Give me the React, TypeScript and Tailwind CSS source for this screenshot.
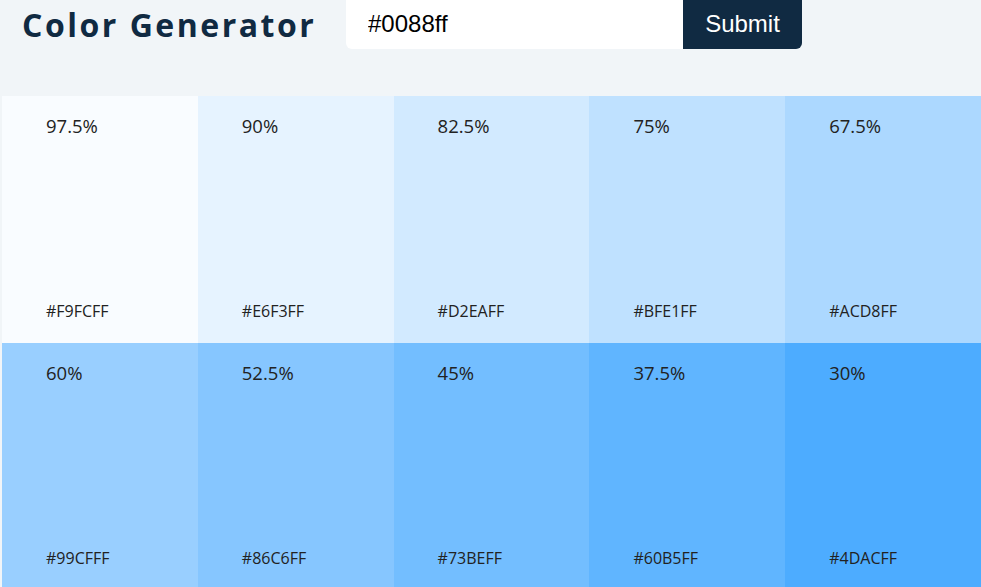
import { useState, FormEvent } from "react";

interface Shade {
  weight: string;
  hex: string;
  bg: string;
}

const shades: Shade[] = [
  { weight: "97.5%", hex: "#F9FCFF", bg: "bg-[#f9fcff]" },
  { weight: "90%", hex: "#E6F3FF", bg: "bg-[#e6f3ff]" },
  { weight: "82.5%", hex: "#D2EAFF", bg: "bg-[#d2eaff]" },
  { weight: "75%", hex: "#BFE1FF", bg: "bg-[#bfe1ff]" },
  { weight: "67.5%", hex: "#ACD8FF", bg: "bg-[#acd8ff]" },
  { weight: "60%", hex: "#99CFFF", bg: "bg-[#99cfff]" },
  { weight: "52.5%", hex: "#86C6FF", bg: "bg-[#86c6ff]" },
  { weight: "45%", hex: "#73BEFF", bg: "bg-[#73beff]" },
  { weight: "37.5%", hex: "#60B5FF", bg: "bg-[#60b5ff]" },
  { weight: "30%", hex: "#4DACFF", bg: "bg-[#4dacff]" },
];

function ColorTile({ weight, hex, bg }: Shade) {
  return (
    <article
      className={`${bg} h-[247px] flex flex-col justify-between pl-[44px] pt-[17px] pb-[21px] font-['Open_Sans',sans-serif] text-[#222]`}
    >
      <p className="text-[18.5px] leading-[26px]">{weight}</p>
      <p className="text-[16px] leading-[22px]">{hex}</p>
    </article>
  );
}

export default function App() {
  const [color, setColor] = useState("#0088ff");

  const handleSubmit = (e: FormEvent) => {
    e.preventDefault();
  };

  return (
    <main className="min-h-screen bg-[#f1f5f8]">
      {/* Header with form */}
      <section className="flex items-start h-[96px]">
        <h1 className="w-[346px] pl-[22px] pt-[5px] text-[32px] leading-10 font-bold tracking-[2.5px] text-[#102a42] font-['Open_Sans',sans-serif]">
          Color Generator
        </h1>
        <form onSubmit={handleSubmit} className="flex">
          <input
            type="text"
            value={color}
            onChange={(e) => setColor(e.target.value)}
            className="w-[337px] h-[49px] pl-[22px] pb-[1px] bg-white rounded-bl-md text-[24px] text-black font-['Liberation_Sans',sans-serif] focus:outline-none"
          />
          <button
            type="submit"
            className="w-[119px] h-[49px] pb-[1px] bg-[#102a42] text-white text-[24px] rounded-br-md font-['Liberation_Sans',sans-serif]"
          >
            Submit
          </button>
        </form>
      </section>

      {/* Shades grid */}
      <section className="grid grid-cols-5 pl-[2px]">
        {shades.map((shade) => (
          <ColorTile key={shade.hex} {...shade} />
        ))}
      </section>
    </main>
  );
}
